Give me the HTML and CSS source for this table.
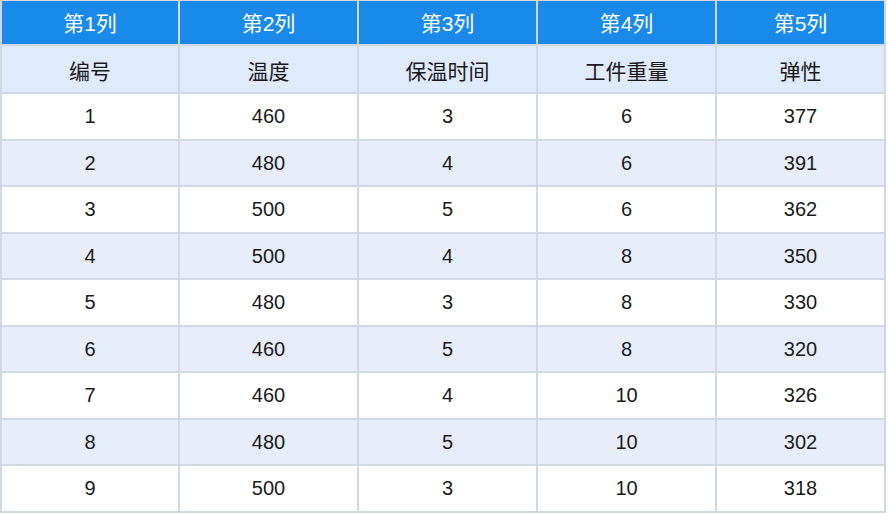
FILE: index.html
```html
<!DOCTYPE html>
<html>
<head>
<meta charset="utf-8">
<link rel="stylesheet" href="styles.css">
</head>
<body>
<table class="grid">
  <colgroup>
    <col class="c-first"><col class="c-std"><col class="c-std"><col class="c-std"><col class="c-last">
  </colgroup>
  <thead>
    <tr class="head"><th>第1列</th><th>第2列</th><th>第3列</th><th>第4列</th><th>第5列</th></tr>
    <tr class="sub"><th>编号</th><th>温度</th><th>保温时间</th><th>工件重量</th><th>弹性</th></tr>
  </thead>
  <tbody>
    <tr><td>1</td><td>460</td><td>3</td><td>6</td><td>377</td></tr>
    <tr><td>2</td><td>480</td><td>4</td><td>6</td><td>391</td></tr>
    <tr><td>3</td><td>500</td><td>5</td><td>6</td><td>362</td></tr>
    <tr><td>4</td><td>500</td><td>4</td><td>8</td><td>350</td></tr>
    <tr><td>5</td><td>480</td><td>3</td><td>8</td><td>330</td></tr>
    <tr><td>6</td><td>460</td><td>5</td><td>8</td><td>320</td></tr>
    <tr><td>7</td><td>460</td><td>4</td><td>10</td><td>326</td></tr>
    <tr><td>8</td><td>480</td><td>5</td><td>10</td><td>302</td></tr>
    <tr><td>9</td><td>500</td><td>3</td><td>10</td><td>318</td></tr>
  </tbody>
</table>
</body>
</html>
```
FILE: styles.css
```css
html, body {
  margin: 0;
  padding: 0;
  background: #ffffff;
}
body {
  font-family: "Liberation Sans", "Noto Sans CJK SC", sans-serif;
  font-size: 20px;
  color: #1a1a1a;
}
.grid {
  width: 884px;
  border-collapse: collapse;
  table-layout: fixed;
}
.c-first { width: 178px; }
.c-std { width: 179px; }
.c-last { width: 169px; }
.grid th,
.grid td {
  border: 2px solid #d0d9e3;
  text-align: center;
  vertical-align: middle;
  padding: 0;
  font-weight: normal;
  line-height: 24px;
}
.grid th {
  font-size: 21px;
}
.head th {
  background: #1a8aea;
  color: #ffffff;
  height: 41px;
  padding-top: 2px;
  border-top-width: 1px;
}
.sub th {
  background: #dfeafa;
  color: #1a1a1a;
  height: 40px;
  padding-top: 6px;
}
tbody td {
  height: 44.5px;
  padding-top: 10px;
}
tbody tr:nth-child(odd) td {
  background: #ffffff;
}
tbody tr:nth-child(even) td {
  background: #e7eef9;
}
```
